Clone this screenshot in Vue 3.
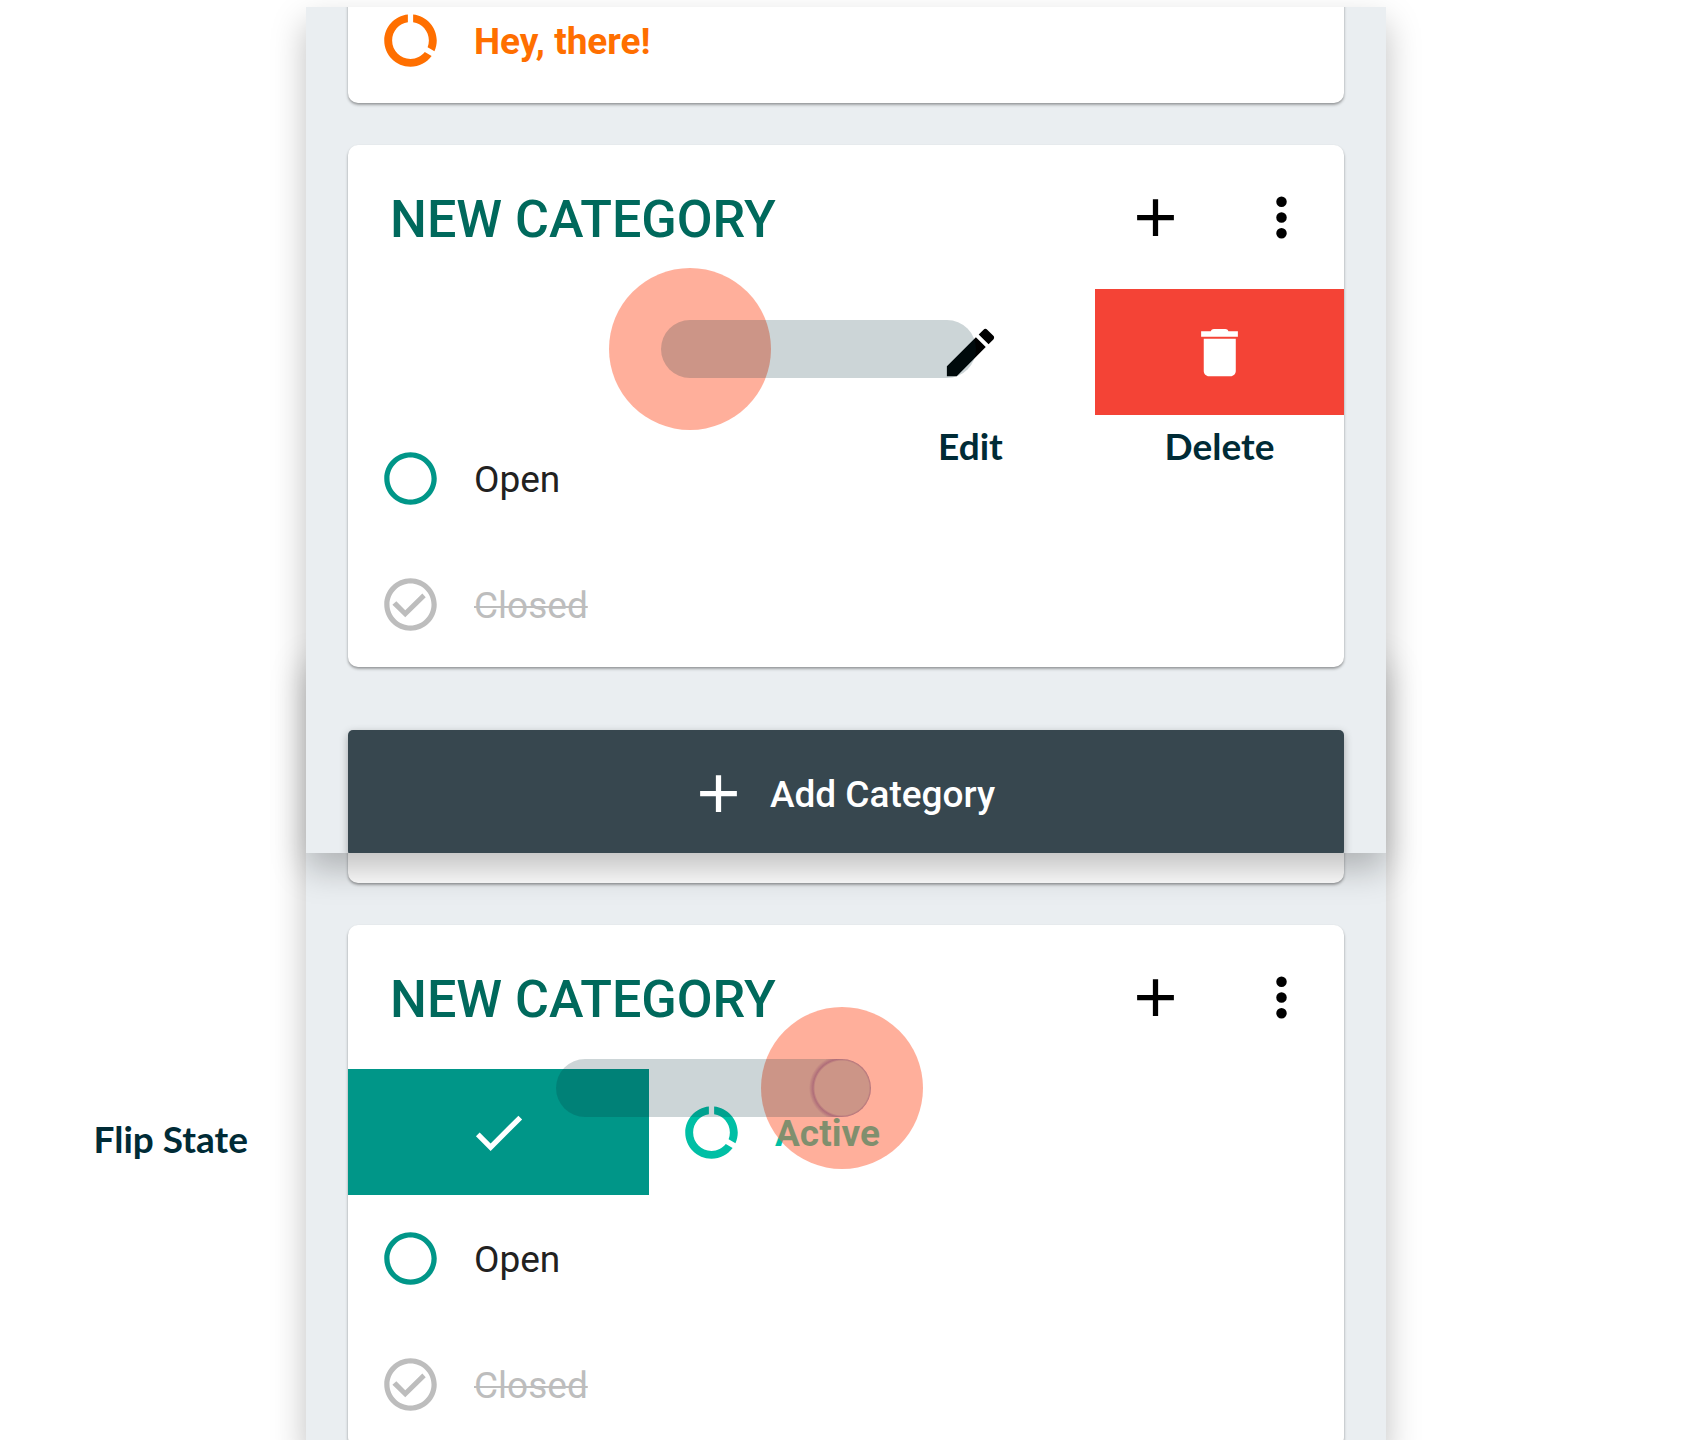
<script setup>
const icons = {
  add: 'M19 13h-6v6h-2v-6H5v-2h6V5h2v6h6z',
  more: 'M12 8a2 2 0 1 0 0-4 2 2 0 0 0 0 4zm0 2a2 2 0 1 0 0 4 2 2 0 0 0 0-4zm0 6a2 2 0 1 0 0 4 2 2 0 0 0 0-4z',
  edit: 'M3 17.25V21h3.75L17.81 9.94l-3.75-3.75L3 17.25zM20.71 7.04c.39-.39.39-1.02 0-1.41l-2.34-2.34c-.39-.39-1.02-.39-1.41 0l-1.83 1.83 3.75 3.75 1.83-1.83z',
  remove: 'M6 6.8v12.2c0 1.1.9 2 2 2h8.2c1.1 0 2-.9 2-2V6.8zM5 3.9h3.7c.2-.6.6-.9 1.2-.9h4.3c.6 0 1 .3 1.2.9H19V6H5z',
  check: 'M9 16.17L4.83 12l-1.42 1.41L9 19 21 7l-1.41-1.41z',
  active: 'M13 2.05v3.03c3.39.49 6 3.39 6 6.92 0 .9-.18 1.75-.48 2.54l2.6 1.53c.56-1.24.88-2.62.88-4.07 0-5.18-3.95-9.45-9-9.95zM12 19c-3.87 0-7-3.13-7-7 0-3.53 2.61-6.43 6-6.92V2.05c-5.06.5-9 4.76-9 9.95 0 5.52 4.47 10 9.99 10 3.31 0 6.24-1.61 8.06-4.09l-2.6-1.53C16.17 17.98 14.21 19 12 19z',
  open: 'M12 2C6.48 2 2 6.48 2 12s4.48 10 10 10 10-4.48 10-10S17.52 2 12 2zm0 18c-4.42 0-8-3.58-8-8s3.58-8 8-8 8 3.58 8 8-3.58 8-8 8z',
  closed: 'M12 2C6.48 2 2 6.48 2 12s4.48 10 10 10 10-4.48 10-10S17.52 2 12 2zm0 18c-4.42 0-8-3.58-8-8s3.58-8 8-8 8 3.58 8 8-3.58 8-8 8zM16.5 7.8L10 14.2l-3.4-3.4L5.1 12.1 10 16.9l7.8-7.7z',
}
const tasks = [
  { state: 'open', text: 'Open' },
  { state: 'closed', text: 'Closed' },
]
</script>

<template>
  <main class="stage">
    <section class="screen screen-front">
      <div class="card card-tail">
        <div class="row task urgent">
          <button class="state" aria-label="Active"><svg viewBox="0 0 24 24"><path :d="icons.active" /></svg></button>
          <span class="task-text">Hey, there!</span>
        </div>
      </div>

      <article class="card">
        <header class="card-head">
          <h2>NEW CATEGORY</h2>
          <button class="tool" aria-label="Add task"><svg viewBox="0 0 24 24"><path :d="icons.add" /></svg></button>
          <button class="tool" aria-label="More"><svg viewBox="0 0 24 24"><path :d="icons.more" /></svg></button>
        </header>
        <ul>
          <li class="row swiped-left">
            <button class="action">
              <svg viewBox="0 0 24 24"><path :d="icons.edit" /></svg>
              <span class="note note-below">Edit</span>
            </button>
            <button class="action delete">
              <svg viewBox="0 0 24 24"><path :d="icons.remove" /></svg>
              <span class="note note-below">Delete</span>
            </button>
            <div class="gesture gesture-left"></div>
          </li>
          <li v-for="t in tasks" :key="t.state" class="row task" :class="t.state">
            <button class="state" :aria-label="t.text"><svg viewBox="0 0 24 24"><path :d="icons[t.state]" /></svg></button>
            <span class="task-text">{{ t.text }}</span>
          </li>
        </ul>
      </article>

      <button class="add-category">
        <svg viewBox="0 0 24 24"><path :d="icons.add" /></svg>
        <span>Add Category</span>
      </button>
    </section>

    <section class="screen screen-back">
      <div class="card card-stub"></div>
      <article class="card">
        <header class="card-head">
          <h2>NEW CATEGORY</h2>
          <button class="tool" aria-label="Add task"><svg viewBox="0 0 24 24"><path :d="icons.add" /></svg></button>
          <button class="tool" aria-label="More"><svg viewBox="0 0 24 24"><path :d="icons.more" /></svg></button>
        </header>
        <ul>
          <li class="row">
            <button class="flip" aria-label="Flip State"><svg viewBox="0 0 24 24"><path :d="icons.check" /></svg></button>
            <div class="row task active">
              <button class="state" aria-label="Active"><svg viewBox="0 0 24 24"><path :d="icons.active" /></svg></button>
              <span class="task-text">Active</span>
            </div>
            <div class="gesture gesture-right"></div>
            <span class="note note-side">Flip State</span>
          </li>
          <li v-for="t in tasks" :key="t.state" class="row task" :class="t.state">
            <button class="state" :aria-label="t.text"><svg viewBox="0 0 24 24"><path :d="icons[t.state]" /></svg></button>
            <span class="task-text">{{ t.text }}</span>
          </li>
        </ul>
      </article>
    </section>
  </main>
</template>

<style>
body {
  margin: 0;
  background: #fff;
}
</style>

<style scoped>
.stage {
  box-sizing: border-box;
  height: 100vh;
  padding-top: 7px;
  overflow: hidden;
  font-family: Roboto, "Liberation Sans", sans-serif;
  font-size: 37px;
  line-height: 44px;
  color: #212121;
}
button {
  margin: 0;
  padding: 0;
  border: 0;
  background: none;
  font: inherit;
  color: inherit;
}
svg {
  display: block;
  flex: none;
  width: 63px;
  height: 63px;
  fill: currentColor;
}
ul {
  margin: 0;
  padding: 0;
  list-style: none;
}
.screen {
  box-sizing: border-box;
  display: flex;
  flex-direction: column;
  gap: 42px;
  max-width: 1080px;
  margin: 0 auto;
  padding: 0 42px;
  background: #eaeef1;
  box-shadow: 0 16px 32px rgba(0, 0, 0, 0.25);
}
.screen-front {
  position: relative;
  z-index: 1;
  overflow: hidden;
}
.screen-back {
  margin-top: -204px;
}
.card {
  border-radius: 10px;
  background: #fff;
  box-shadow: 0 2px 3px rgba(0, 0, 0, 0.3), 0 1px 2px rgba(0, 0, 0, 0.1);
}
.card-tail {
  margin-top: -30px;
}
.card-stub {
  height: 234px;
}
.card-head {
  display: flex;
  align-items: center;
  height: 144px;
  padding-left: 42px;
}
h2 {
  flex: 1;
  margin: 0;
  padding-top: 6px;
  font-size: 52px;
  line-height: 60px;
  font-weight: 500;
  color: #00695c;
}
.tool {
  display: grid;
  place-items: center;
  width: 126px;
  height: 126px;
  color: #000;
}
.row {
  position: relative;
  display: flex;
  align-items: center;
  height: 126px;
}
.task {
  gap: 32px;
  padding-left: 31px;
}
.task-text {
  padding-top: 3px;
}
.open .state {
  color: #009688;
}
.closed {
  color: #bdbdbd;
}
.closed .task-text {
  text-decoration: line-through 2px;
}
.urgent {
  font-weight: 700;
  color: #ff6f00;
}
.active {
  font-weight: 700;
  color: #00bfa5;
}
.swiped-left {
  justify-content: flex-end;
}
.action {
  position: relative;
  display: grid;
  place-items: center;
  width: 249px;
  height: 126px;
  color: #000;
}
.delete {
  background: #f44336;
  color: #fff;
}
.flip {
  display: grid;
  place-items: center;
  width: 301px;
  height: 126px;
  background: #009688;
  color: #fff;
}
.note {
  position: absolute;
  font-family: Lato, "Open Sans", sans-serif;
  font-weight: 700;
  white-space: nowrap;
  color: #002b36;
}
.note-below {
  top: 100%;
  left: 0;
  right: 0;
  margin-top: 9px;
  text-align: center;
}
.note-side {
  right: 100%;
  margin-right: 100px;
  margin-top: 14px;
}
/* Swipe trail with the fingertip at one end */
.gesture {
  position: absolute;
  width: 315px;
  height: 58px;
}
.gesture::before {
  content: "";
  position: absolute;
  top: -52px;
  width: 162px;
  height: 162px;
  border-radius: 50%;
  background: rgba(255, 95, 55, 0.5);
}
.gesture::after {
  content: "";
  position: absolute;
  inset: 0;
  border-radius: 29px;
  background: rgba(0, 43, 54, 0.2);
}
.gesture-left {
  top: 31px;
  right: 368px;
}
.gesture-left::before {
  left: -52px;
}
.gesture-right {
  top: -10px;
  left: 208px;
}
.gesture-right::before {
  right: -52px;
}
.gesture-right::after {
  background: radial-gradient(circle at calc(100% - 29px) 50%, transparent 27px, rgba(110, 20, 90, 0.3) 29px, transparent 33px), rgba(0, 43, 54, 0.2);
}
.add-category {
  display: flex;
  align-items: center;
  justify-content: center;
  gap: 20px;
  height: 126px;
  margin-top: 21px;
  margin-bottom: -3px;
  padding-right: 10px;
  border-radius: 5px;
  background: #37474f;
  box-shadow: 0 3px 8px rgba(0, 0, 0, 0.3);
  font-weight: 500;
  color: #fff;
}
.add-category span {
  padding-top: 3px;
}
</style>
